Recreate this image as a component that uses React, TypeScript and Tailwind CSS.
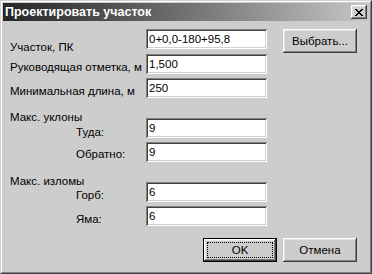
import React from 'react'

const sunken =
  'shadow-[inset_1px_1px_#808080,inset_-1px_-1px_#ffffff,inset_2px_2px_#404040,inset_-2px_-2px_#d4d0c8]'
const raised =
  'shadow-[inset_-1px_-1px_#404040,inset_1px_1px_#ffffff,inset_-2px_-2px_#808080,inset_2px_2px_#e4e4e4]'

const Edit = ({ value, className = '' }: { value: string; className?: string }) => (
  <div className={`w-[121px] h-[20px] shrink-0 bg-white pl-[3px] leading-[20px] ${sunken} ${className}`}>
    {value}
  </div>
)

const Btn = ({ children, isDefault, className = '' }: { children: React.ReactNode; isDefault?: boolean; className?: string }) => (
  <div
    className={`relative w-[74px] h-[24px] shrink-0 flex items-center justify-center bg-[#cdcdcd] ${
      isDefault ? 'border border-black' : ''
    } ${raised} ${className}`}
  >
    {children}
    {isDefault && <div className="absolute inset-[3px] border border-dotted border-black" />}
  </div>
)

// pixel cross of the classic close box
const crossRows = ['11000011', '01100110', '00111100', '00011000', '00111100', '01100110', '11000011']

const CloseBox = () => (
  <div className={`w-[16px] h-[14px] flex items-center justify-center bg-[#cdcdcd] ${raised}`}>
    <svg width="8" height="7" viewBox="0 0 8 7" shapeRendering="crispEdges">
      {crossRows.map((row, y) =>
        row.split('').map((c, x) => (c === '1' ? <rect key={`${x}-${y}`} x={x} y={y} width="1" height="1" fill="#000" /> : null))
      )}
    </svg>
  </div>
)

export default function App() {
  return (
    <div className="w-[372px] h-[274px] bg-[#cdcdcd] border border-t-[#d4d0c8] border-l-[#d4d0c8] border-r-[#404040] border-b-[#404040] font-['Liberation_Sans',Arial,sans-serif] text-[11.5px] leading-[14px] text-black">
      <div className="h-full border border-t-white border-l-white border-r-[#808080] border-b-[#808080] p-[1px] flex flex-col">
        <div className="h-[18px] flex items-center justify-between pl-[2px] pr-[2px] bg-gradient-to-r from-[#262626] to-[#c8c8c8]">
          <span className="text-white font-bold text-[12.5px]">Проектировать участок</span>
          <CloseBox />
        </div>

        <div className="flex flex-col pl-[7px] pt-[8px]">
          <div className="flex h-[25px]">
            <div className="w-[136px] pt-[11px]">Участок, ПК</div>
            <Edit value="0+0,0-180+95,8" />
            <Btn className="ml-[16px]">Выбрать...</Btn>
          </div>
          <div className="flex h-[24px]">
            <div className="w-[136px] pt-[6px]">Руководящая отметка, м</div>
            <Edit value="1,500" />
          </div>
          <div className="flex h-[32px]">
            <div className="w-[136px] pt-[6px]">Минимальная длина, м</div>
            <Edit value="250" />
          </div>
          <div className="flex h-[32px]">
            <div className="w-[136px] flex flex-col">
              <span>Макс. уклоны</span>
              <span className="pl-[66px] mt-[1px]">Туда:</span>
            </div>
            <Edit value="9" className="mt-[8px]" />
          </div>
          <div className="flex h-[32px]">
            <div className="w-[136px] pt-[5px] pl-[66px]">Обратно:</div>
            <Edit value="9" />
          </div>
          <div className="flex h-[32px]">
            <div className="w-[136px] flex flex-col">
              <span>Макс. изломы</span>
              <span className="pl-[66px]">Горб:</span>
            </div>
            <Edit value="6" className="mt-[8px]" />
          </div>
          <div className="flex h-[20px]">
            <div className="w-[136px] pt-[6px] pl-[66px]">Яма:</div>
            <Edit value="6" />
          </div>

          <div className="flex justify-end gap-[6px] mt-[12px] pr-[12px]">
            <Btn isDefault>OK</Btn>
            <Btn>Отмена</Btn>
          </div>
        </div>
      </div>
    </div>
  )
}
